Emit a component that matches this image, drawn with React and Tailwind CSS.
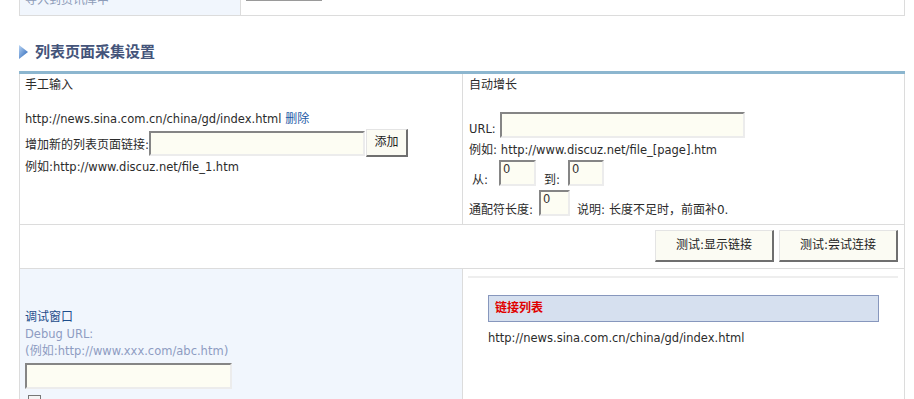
import React from "react";

const Latin = ({ children, className = "" }) => (
  <span className={`text-[11.5px] ${className}`}>{children}</span>
);

const Field = ({ className = "", value = "" }) => (
  <input
    readOnly
    defaultValue={value}
    className={`box-border bg-[#fdfdf3] border-2 border-t-[#858585] border-l-[#858585] border-r-[#ececec] border-b-[#ececec] pl-[2px] pb-[8px] text-[11.5px] text-[#333] outline-none ${className}`}
  />
);

const Button = ({ children, className = "" }) => (
  <button className={`box-border bg-[#fbfbf3] border border-t-[#e4e4e4] border-l-[#e4e4e4] border-r-2 border-b-2 border-r-[#6f6f6f] border-b-[#6f6f6f] text-[12px] text-[#222] ${className}`}>
    {children}
  </button>
);

export default function App() {
  return (
    <div className="w-[914px] h-[399px] overflow-hidden bg-white text-[12px] leading-[17px] text-[#2b2b2b] font-['DejaVu_Sans','Noto_Sans_CJK_SC',sans-serif]">
      <div className="ml-[19px] w-[886px]">
        {/* previous table, cut at the top */}
        <div className="flex h-[16px] border-l border-r border-b border-[#dcdcdc]">
          <div className="w-[221px] border-r border-[#dcdcdc] bg-[#f1f6fd] pl-[5px] text-[#8d9bb8]">
            <div className="-mt-[8px]">导入到资讯库中</div>
          </div>
          <div className="flex-1 pl-[5px]">
            <div className="-mt-[2px] h-[3px] w-[76px] border border-[#9a9a9a] bg-[#fdfdf3]" />
          </div>
        </div>

        {/* section title */}
        <div className="mt-[26px] flex items-center gap-[7px] h-[20px]">
          <svg width="9" height="14" viewBox="0 0 9 14">
            <defs>
              <linearGradient id="tri" x1="0" y1="0" x2="1" y2="1">
                <stop offset="0" stopColor="#b8d4f4" />
                <stop offset="1" stopColor="#2461b5" />
              </linearGradient>
            </defs>
            <path d="M0 0 L9 7 L0 14 Z" fill="url(#tri)" />
          </svg>
          <span className="text-[15px] font-bold text-[#44547a]">列表页面采集设置</span>
        </div>

        {/* table */}
        <div className="mt-[9px] border-t-[3px] border-[#8cb6cf]">
          <div className="border-l border-r border-[#dcdcdc]">
            {/* row 1 */}
            <div className="box-border flex h-[151px] border-b border-[#dcdcdc]">
              <div className="w-[443px] border-r border-[#dcdcdc] pl-[5px] pt-[3px]">
                <div>手工输入</div>
                <div className="h-[17px]" />
                <div>
                  <Latin>http://news.sina.com.cn/china/gd/index.html</Latin>{" "}
                  <span className="text-[#1c5aa6]">删除</span>
                </div>
                <div className="mt-[1px] flex items-center">
                  <span className="self-end mb-[3px]">增加新的列表页面链接:</span>
                  <Field className="w-[216px] h-[25px]" />
                  <Button className="ml-[1px] w-[42px] h-[28px]">添加</Button>
                </div>
                <div className="mt-[2px]">
                  例如:<Latin>http://www.discuz.net/file_1.htm</Latin>
                </div>
              </div>

              <div className="flex-1 pl-[6px] pt-[3px]">
                <div>自动增长</div>
                <div className="mt-[18px] flex items-end gap-[4px]">
                  <Latin>URL:</Latin>
                  <Field className="w-[245px] h-[26px]" />
                </div>
                <div className="mt-[4px]">
                  例如: <Latin>http://www.discuz.net/file_[page].htm</Latin>
                </div>
                <div className="mt-[1px] flex items-end">
                  <span className="ml-[3px] -mb-[3px]">从:</span>
                  <Field className="ml-[11px] w-[37px] h-[26px]" value="0" />
                  <span className="ml-[8px] -mb-[3px]">到:</span>
                  <Field className="ml-[8px] w-[36px] h-[26px]" value="0" />
                </div>
                <div className="mt-[4px] flex items-end">
                  <span className="-mb-[3px]">通配符长度:</span>
                  <Field className="ml-[6px] w-[31px] h-[26px]" value="0" />
                  <span className="ml-[7px] -mb-[3px]">说明: 长度不足时，前面补0.</span>
                </div>
              </div>
            </div>

            {/* row 2 */}
            <div className="box-border flex h-[44px] justify-end gap-[5px] border-b border-[#dcdcdc] pr-[6px] pt-[5px]">
              <Button className="w-[119px] h-[32px]">测试:显示链接</Button>
              <Button className="w-[119px] h-[32px]">测试:尝试连接</Button>
            </div>

            {/* row 3 */}
            <div className="flex h-[200px]">
              <div className="w-[443px] border-r border-[#dcdcdc] bg-[#f1f6fd] pl-[5px] pt-[40px]">
                <div className="text-[#1d4d8b]">调试窗口</div>
                <div className="text-[#8e9cc2]">
                  <Latin>Debug URL:</Latin>
                </div>
                <div className="text-[#8e9cc2]">
                  (例如:<Latin>http://www.xxx.com/abc.htm</Latin>)
                </div>
                <Field className="mt-[3px] w-[207px] h-[26px]" />
                <div className="mt-[6px] ml-[3px] h-[13px] w-[13px] border border-[#777] bg-[#f4f4f4]" />
              </div>
              <div className="flex-1 pl-[5px] pr-[6px] pt-[7px]">
                <div className="h-[2px] bg-[#eeeeee]" />
                <div className="ml-[20px] mt-[17px] box-border h-[27px] w-[391px] border border-[#8797bd] bg-[#d6e0ef] pl-[6px] leading-[25px] font-bold text-[#e00000]">
                  链接列表
                </div>
                <div className="ml-[20px] mt-[8px]">
                  <Latin>http://news.sina.com.cn/china/gd/index.html</Latin>
                </div>
              </div>
            </div>
          </div>
        </div>
      </div>
    </div>
  );
}
